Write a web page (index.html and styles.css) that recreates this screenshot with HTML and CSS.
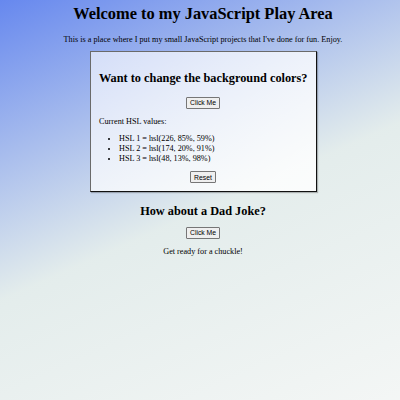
FILE: index.html
```html
<!DOCTYPE html>
<html lang="en">
<head>
<meta charset="utf-8">
<title>JavaScript Play Area</title>
<link rel="stylesheet" href="styles.css">
</head>
<body>
<main class="page">
  <h1 class="title">Welcome to my JavaScript Play Area</h1>
  <p class="intro">This is a place where I put my small JavaScript projects that I've done for fun. Enjoy.</p>

  <section class="card">
    <h2 class="card-title">Want to change the background colors?</h2>
    <button class="btn">Click Me</button>
    <p class="label">Current HSL values:</p>
    <ul class="hsl-list">
      <li>HSL 1 = hsl(226, 85%, 59%)</li>
      <li>HSL 2 = hsl(174, 20%, 91%)</li>
      <li>HSL 3 = hsl(48, 13%, 98%)</li>
    </ul>
    <button class="btn">Reset</button>
  </section>

  <section class="joke">
    <h2 class="joke-title">How about a Dad Joke?</h2>
    <button class="btn">Click Me</button>
    <p class="joke-text">Get ready for a chuckle!</p>
  </section>
</main>
</body>
</html>
```

FILE: styles.css
```css
html {
  height: 100%;
}

body {
  margin: 0;
  min-height: 100%;
  font-family: "Liberation Serif", "Times New Roman", serif;
  color: #000;
  background: linear-gradient(156deg, hsl(226, 85%, 59%) -17%, hsl(174, 20%, 91%) 52%, hsl(48, 13%, 98%) 121%);
}

.page {
  padding: 4px 0 0 6px;
  text-align: center;
}

.title {
  font-size: 16.4px;
  margin: 0 0 11px;
}

.intro {
  font-size: 8.2px;
  margin: 0 0 7px;
}

.card {
  width: 208px;
  margin: 0 auto;
  padding: 8px 8.5px;
  border: 1px solid #111;
  border-top-color: #6a6a6a;
  border-left-color: #6a6a6a;
  box-shadow: 1px 1px 1px rgba(0, 0, 0, 0.25);
  background: linear-gradient(135deg, rgba(255, 255, 255, 0.62), rgba(255, 255, 255, 0.85));
  text-align: left;
}

.card-title {
  font-size: 12.3px;
  margin: 10.5px 0 11px;
  text-align: center;
  white-space: nowrap;
}

.btn {
  display: block;
  margin: 0 auto;
  font-family: "Liberation Sans", Arial, sans-serif;
  font-size: 6.8px;
  padding: 1.5px 3px;
  border: 1px solid #767676;
  border-radius: 1px;
  background: #efefef;
  color: #000;
}

.label {
  font-size: 8.2px;
  margin: 8.2px 0;
}

.hsl-list {
  font-size: 8.2px;
  line-height: 10px;
  margin: 8.2px 0 7.5px;
  padding-left: 20px;
}

.joke-title {
  font-size: 12.3px;
  margin: 11.5px 0 8px;
}

.joke-text {
  font-size: 8.2px;
  margin: 8.5px 0;
}
```
